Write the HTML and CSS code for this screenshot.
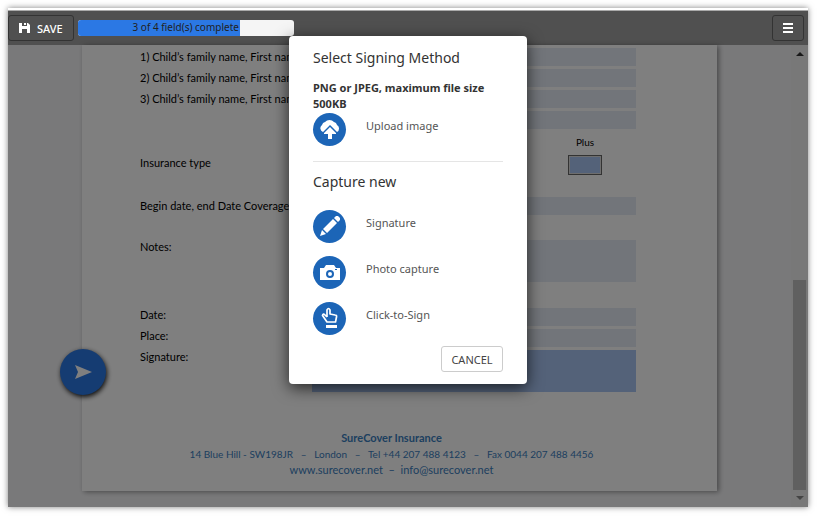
FILE: index.html
```html
<!DOCTYPE html>
<html lang="en">
<head>
    <meta charset="UTF-8">
    <meta name="viewport" content="width=device-width, initial-scale=1.0">
    <title>SureCover Insurance</title>
    <link rel="stylesheet" href="styles.css">
</head>
<body>
    <div class="app">
        <header class="toolbar">
            <button class="tool-btn save-btn">
                <svg width="11" height="10" viewBox="0 0 11 10"><path fill="#fff" fill-rule="evenodd" d="M0 0h9l2 2v8H8V6H3v4H0zM3 0v3h5V0zM5 0h2v2H5z"/></svg>
                SAVE
            </button>
            <div class="progress" role="progressbar" aria-valuenow="3" aria-valuemin="0" aria-valuemax="4">
                <div class="progress-bar" style="width: 75%"></div>
                <span class="progress-text">3 of 4 field(s) complete</span>
            </div>
            <button class="tool-btn menu-btn" aria-label="Menu">
                <svg width="10" height="10" viewBox="0 0 10 10"><path fill="#fff" d="M0 0h10v2H0zM0 4h10v2H0zM0 8h10v2H0z"/></svg>
            </button>
        </header>
        <main class="viewer">
            <div class="canvas">
                <form class="page">
                    <div class="group">
                        <div class="row">
                            <label for="child1">1) Child’s family name, First name</label>
                            <input type="text" id="child1">
                        </div>
                        <div class="row">
                            <label for="child2">2) Child’s family name, First name</label>
                            <input type="text" id="child2">
                        </div>
                        <div class="row">
                            <label for="child3">3) Child’s family name, First name</label>
                            <input type="text" id="child3">
                        </div>
                        <div class="row">
                            <span></span>
                            <input type="text" aria-label="More children">
                        </div>
                    </div>
                    <div class="row insurance">
                        <span>Insurance type</span>
                        <div class="plus">
                            <label for="plus">Plus</label>
                            <input type="checkbox" id="plus">
                        </div>
                    </div>
                    <div class="row coverage">
                        <label for="coverage">Begin date, end Date Coverage</label>
                        <input type="text" id="coverage">
                    </div>
                    <div class="row notes">
                        <label for="notes">Notes:</label>
                        <textarea id="notes"></textarea>
                    </div>
                    <div class="group signing">
                        <div class="row">
                            <label for="date">Date:</label>
                            <input type="text" id="date">
                        </div>
                        <div class="row">
                            <label for="place">Place:</label>
                            <input type="text" id="place">
                        </div>
                        <div class="row">
                            <label for="signature">Signature:</label>
                            <textarea id="signature" class="required"></textarea>
                        </div>
                    </div>
                    <footer class="company">
                        <b>SureCover Insurance</b>
                        <span class="address">14 Blue Hill - SW198JR &nbsp;&nbsp;–&nbsp;&nbsp; London &nbsp;&nbsp;–&nbsp;&nbsp; Tel +44 207 488 4123 &nbsp;&nbsp;–&nbsp;&nbsp; Fax 0044 207 488 4456</span>
                        <span>www.surecover.net &nbsp;–&nbsp; info@surecover.net</span>
                    </footer>
                </form>
            </div>
            <div class="scrollbar">
                <svg width="8" height="4" viewBox="0 0 8 4"><path fill="#333" d="M4 0l4 4H0z"/></svg>
                <div class="track"><div class="thumb"></div></div>
                <svg width="8" height="4" viewBox="0 0 8 4"><path fill="#888" d="M0 0h8L4 4z"/></svg>
            </div>
            <button class="next-btn" type="button" aria-label="Next field">
                <svg width="17" height="14" viewBox="0 0 17 14"><path fill="#fff" d="M0 0l17 7L0 14l3-7z"/></svg>
            </button>
            <div class="backdrop"></div>
        </main>
        <div class="modal-wrap">
            <div class="modal" role="dialog" aria-labelledby="modal-title">
                <h2 id="modal-title">Select Signing Method</h2>
                <p class="hint">PNG or JPEG, maximum file size 500KB</p>
                <button class="method">
                    <span class="circle">
                        <svg width="22" height="20" viewBox="0 0 22 20"><path fill="#fff" d="M4 13a4 4 0 0 1-1-7 4 4 0 0 1 3-3 6 6 0 0 1 9 0 4 4 0 0 1 3 3 4 4 0 0 1 0 7z"/><path fill="#fff" stroke="#1c65b7" stroke-width="3" paint-order="stroke" d="M11 8l6 6v1h-4v5H9v-5H5v-1z"/></svg>
                    </span>
                    <span class="name">Upload image</span>
                </button>
                <hr>
                <h2>Capture new</h2>
                <div class="methods">
                    <button class="method">
                        <span class="circle">
                            <svg width="20" height="20" viewBox="0 0 20 20"><path fill="#fff" d="M14 2l2-2h2l2 2v2l-2 2zM13 3l4 4L7 17l-4-4zM2 14l4 4-6 2z"/></svg>
                        </span>
                        <span class="name">Signature</span>
                    </button>
                    <button class="method">
                        <span class="circle">
                            <svg width="20" height="15" viewBox="0 0 20 15"><path fill="#fff" d="M0 3h4l2-3h8l2 3h4v12H0z"/><circle cx="10" cy="9" r="3" fill="none" stroke="#1c65b7" stroke-width="2"/><path fill="#1c65b7" d="M15 4h2v1h-2z"/></svg>
                        </span>
                        <span class="name">Photo capture</span>
                    </button>
                    <button class="method">
                        <span class="circle">
                            <svg width="18" height="22" viewBox="0 0 18 22"><path fill="none" stroke="#fff" stroke-width="1.7" stroke-linejoin="round" d="M6 10V3Q7.500 0 9 3v4l5 1q2 0 1.500 2l-1 5H6L1.500 8.500Q2 6 4 8l2 2"/><path fill="#fff" d="M5 18h11v3H5z"/></svg>
                        </span>
                        <span class="name">Click-to-Sign</span>
                    </button>
                </div>
                <div class="actions">
                    <button class="cancel-btn">CANCEL</button>
                </div>
            </div>
        </div>
    </div>
</body>
</html>
```
FILE: styles.css
```css
* {
    box-sizing: border-box;
}
body {
    margin: 0;
    padding: 8px 9px 9px 8px;
    height: 100vh;
    background: #fff;
    font-family: "Noto Sans", sans-serif;
    font-size: 11px;
    color: #333;
}
button {
    font-family: inherit;
    font-size: 11px;
    cursor: pointer;
}
svg {
    display: block;
}
h2,
p {
    margin: 0;
}

.app {
    position: relative;
    display: flex;
    flex-direction: column;
    height: 100%;
    padding-top: 2px;
    background: #fff;
    box-shadow: 0 0 6px rgba(0, 0, 0, 0.5);
}

/* toolbar */
.toolbar {
    display: flex;
    align-items: center;
    gap: 4px;
    height: 35px;
    padding-right: 4px;
    border-top: 1px solid #aaa;
    background: #505050;
}
.tool-btn {
    display: flex;
    align-items: center;
    justify-content: center;
    gap: 7px;
    height: 26px;
    padding: 0 10px;
    border: 1px solid #333;
    border-radius: 3px;
    background: #505050;
    color: #fff;
    font-weight: 500;
}
.menu-btn {
    width: 32px;
    margin-left: auto;
}
.progress {
    position: relative;
    width: 216px;
    height: 16px;
    border-radius: 3px;
    background: #f5f5f5;
    overflow: hidden;
}
.progress-bar {
    height: 100%;
    background: #2b78e4;
}
.progress-text {
    position: absolute;
    inset: 0;
    font-size: 10px;
    line-height: 15px;
    text-align: center;
    color: #222;
}

/* document */
.viewer {
    position: relative;
    display: flex;
    flex: 1;
    min-height: 0;
    background: #f3f3f5;
}
.canvas {
    flex: 1;
    padding: 0 74px 16px;
}
.page {
    height: 100%;
    padding: 3px 74px 0 58px;
    background: #fff;
    box-shadow: 2px 1px 5px rgba(0, 0, 0, 0.4);
    font-family: Lato, sans-serif;
    color: #000;
}
.group {
    display: flex;
    flex-direction: column;
    gap: 3px;
}
.row {
    display: grid;
    grid-template-columns: 172px 1fr;
    padding-right: 7px;
    line-height: 18px;
    white-space: nowrap;
}
.row input,
.row textarea {
    display: block;
    width: 100%;
    height: 18px;
    padding: 0 4px;
    border: none;
    background: #e4ebf5;
    font: inherit;
    resize: none;
}
.row textarea {
    height: 42px;
}
.row .required {
    background: #a9c5f3;
}
.insurance {
    align-items: end;
    margin-top: 4px;
    line-height: 24px;
}
.plus {
    display: flex;
    flex-direction: column;
    align-items: center;
    justify-self: end;
    gap: 4px;
    margin-right: 34px;
    font-size: 10px;
    line-height: 18px;
}
.row .plus input {
    appearance: none;
    width: 34px;
    height: 20px;
    margin: 0;
    border: 1px solid #666;
    outline: 1px solid #ddd;
    outline-offset: -2px;
    background: #a9c5f3;
}
.coverage {
    margin-top: 22px;
}
.notes {
    margin: 25px 0 26px;
}
.notes,
.signing .row {
    line-height: 14px;
}
.company {
    display: flex;
    flex-direction: column;
    margin-top: 38px;
    line-height: 16px;
    text-align: center;
    color: #3b80c0;
}
.address {
    font-size: 10px;
}

.scrollbar {
    display: flex;
    flex-direction: column;
    align-items: center;
    width: 17px;
    padding: 7px 0;
    background: #f1f1f1;
}
.track {
    display: flex;
    flex-direction: column;
    justify-content: flex-end;
    flex: 1;
    width: 13px;
    padding: 6px 0;
}
.thumb {
    height: 49%;
    background: #c1c1c1;
}
.next-btn {
    position: absolute;
    left: 52px;
    bottom: 112px;
    display: flex;
    align-items: center;
    justify-content: center;
    width: 46px;
    height: 46px;
    border: none;
    border-radius: 50%;
    background: #2b78e4;
    box-shadow: 1px 2px 5px rgba(0, 0, 0, 0.9);
}
.backdrop {
    position: absolute;
    inset: 0;
    background: rgba(0, 0, 0, 0.5);
}

/* signing dialog */
.modal-wrap {
    position: absolute;
    inset: 28px 0 0;
    display: flex;
    align-items: flex-start;
    justify-content: center;
}
.modal {
    width: 238px;
    padding: 12px 24px;
    border-radius: 4px;
    background: #fff;
    box-shadow: 0 4px 16px rgba(0, 0, 0, 0.7);
}
.modal h2 {
    font-size: 14px;
    font-weight: 400;
    line-height: 20px;
}
.hint {
    margin-top: 12px;
    font-weight: 700;
    line-height: 16px;
}
.method {
    display: flex;
    align-items: center;
    gap: 20px;
    width: 100%;
    height: 34px;
    padding: 0;
    border: none;
    background: none;
    text-align: left;
    color: #555;
}
.circle {
    display: flex;
    align-items: center;
    justify-content: center;
    width: 33px;
    height: 33px;
    border-radius: 50%;
    background: #1c65b7;
}
.name {
    padding-bottom: 8px;
}
.modal hr {
    margin: 15px 0 10px;
    border: none;
    border-top: 1px solid #e5e5e5;
}
.methods {
    display: flex;
    flex-direction: column;
    gap: 12px;
    margin-top: 17px;
}
.actions {
    display: flex;
    justify-content: flex-end;
    margin-top: 11px;
}
.cancel-btn {
    width: 62px;
    height: 26px;
    padding: 0;
    border: 1px solid #ccc;
    border-radius: 3px;
    background: #fff;
    color: #444;
}
```
